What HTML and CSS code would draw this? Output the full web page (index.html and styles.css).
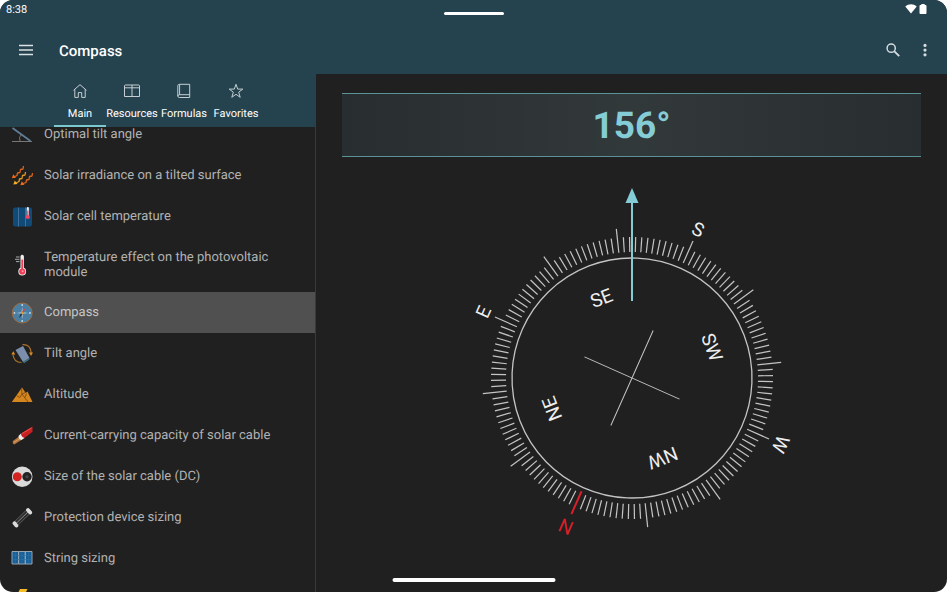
FILE: index.html
```html
<!DOCTYPE html>
<html lang="en">
<head>
    <meta charset="utf-8">
    <meta name="viewport" content="width=device-width, initial-scale=1">
    <title>Compass</title>
    <link rel="stylesheet" href="styles.css">
</head>
<body>
    <div class="app">
        <header class="header">
            <div class="status">
                <span>8:38</span>
                <span class="handle"></span>
                <span class="status-icons">
                    <svg width="12" height="10" viewBox="0 0 12 10"><path d="M0.3 2.4C3.6-.4 8.4-.4 11.7 2.4L6 9.6z" fill="#fff"/></svg>
                    <svg width="8" height="10" viewBox="0 0 8 10"><path d="M2.3 0h3.4v1H6.6q.9 0 .9.9v7.2q0 .9-.9.9H1.4q-.9 0-.9-.9V1.9q0-.9.9-.9h.9z" fill="#fff"/></svg>
                </span>
            </div>
            <div class="toolbar">
                <button type="button" class="icon-button">
                    <svg width="16" height="12" viewBox="0 0 16 12"><path d="M1 1.5h14M1 6h14M1 10.5h14" stroke="#dbe1e4" stroke-width="1.4"/></svg>
                </button>
                <h1>Compass</h1>
                <button type="button" class="icon-button">
                    <svg width="14" height="14" viewBox="0 0 14 14" fill="none" stroke="#d3dbde"><circle cx="5.2" cy="5.2" r="4.1" stroke-width="1.5"/><path d="M8.4 8.4l4.8 4.8" stroke-width="1.9"/></svg>
                </button>
                <button type="button" class="icon-button">
                    <svg width="4" height="14" viewBox="0 0 4 14" fill="#d3dbde"><circle cx="2" cy="2.4" r="1.6"/><circle cx="2" cy="7.1" r="1.6"/><circle cx="2" cy="11.8" r="1.6"/></svg>
                </button>
            </div>
        </header>

        <div class="content">
            <aside class="sidebar">
                <nav class="tabs">
                    <a href="#main" class="tab active">
                        <svg width="16" height="16" viewBox="0 0 16 16"><path d="M1.5 7.3L8 1.7l6.5 5.6M2.8 6.3v8.1h3.5V9.6h3.4v4.8h3.5V6.3"/></svg>
                        Main
                    </a>
                    <a href="#resources" class="tab">
                        <svg width="16" height="16" viewBox="0 0 16 16"><path d="M1.5 2q-1 0-1 1v10.5h15V3q0-1-1-1zM.5 4.8h15M8 2v11.5"/></svg>
                        Resources
                    </a>
                    <a href="#formulas" class="tab">
                        <svg width="16" height="16" viewBox="0 0 16 16"><path d="M3.5 1.3h10.2v13.2H3.5q-1.700 0-1.700-1.400V2.700q0-1.400 1.700-1.400zM1.800 13.100q0-1.400 1.700-1.400h10.200M3.600 1.300v10.400"/></svg>
                        Formulas
                    </a>
                    <a href="#favorites" class="tab">
                        <svg width="16" height="16" viewBox="0 0 16 16"><path d="M8 1.3l1.7 4.8h5.1l-4.1 3.1 1.5 5.1L8 11.3l-4.2 3 1.5-5.1-4.1-3.1h5.1z"/></svg>
                        Favorites
                    </a>
                </nav>
                <ul class="list" id="list">
                    <li><a href="#optimal" class="item">
                        <svg width="22" height="22" viewBox="0 0 22 22" fill="none"><path d="M1 17.5h20" stroke="#777" stroke-width="1.2"/><path d="M1.5 4l18 13" stroke="#5f7f99" stroke-width="1.7"/><path d="M9 17q-1.5-4 1-6" stroke="#777"/></svg>
                        Optimal tilt angle
                    </a></li>
                    <li><a href="#irradiance" class="item">
                        <svg width="22" height="22" viewBox="0 0 22 22" fill="none" stroke-width="1.3" stroke-linejoin="round">
                            <path d="M12.500 1l-.5 3-2.500.5-.5 3-2.500.5-.5 2.500-3 1.500" stroke="#d9651a"/>
                            <path d="M14.500 7l-.5 3-2.500.5-.5 3-2.500.5-.5 2.500-4 2" stroke="#e09a22"/>
                            <path d="M21.500 8l-.5 3-2.500.5-.5 3-2.500.5-.5 2.500-4 1.500" stroke="#d9651a"/>
                            <path d="M.8 13.300l1.500-4 2.700 3.500zM9.300 20.300l1.500-4 2.700 3.500z" fill="#ee6a14"/>
                            <path d="M2.300 19.500l1.500-4 2.700 3.500z" fill="#f5b025"/>
                        </svg>
                        Solar irradiance on a tilted surface
                    </a></li>
                    <li><a href="#cell" class="item">
                        <svg width="22" height="22" viewBox="0 0 22 22"><rect x="2" y="1.5" width="19" height="19" rx="2" fill="#104a78"/><path d="M7.500 1.500v19M14.500 1.500v19" stroke="#3f6f94"/><path d="M16.800 2v8" stroke="#eee" stroke-width="2.200" stroke-linecap="round"/><path d="M16.800 4.500v6" stroke="#ef3e58" stroke-width="1.200"/><circle cx="16.800" cy="11" r="2.100" fill="#ef4660"/></svg>
                        Solar cell temperature
                    </a></li>
                    <li><a href="#effect" class="item two-line">
                        <svg width="22" height="22" viewBox="0 0 22 22"><path d="M5 3h3.500M4 5.300h4.500M5 7.600h3.500" stroke="#aaa"/><path d="M11.200 2.500v13" stroke="#eee" stroke-width="3.400" stroke-linecap="round"/><circle cx="11.200" cy="17.500" r="3.900" fill="#eee"/><path d="M11.200 5.500v11" stroke="#ef3e58" stroke-width="1.700"/><circle cx="11.200" cy="17.500" r="3.100" fill="#f03e5a"/><circle cx="11.700" cy="17.300" r="1" fill="#ff9aaa"/></svg>
                        Temperature effect on the photovoltaic module
                    </a></li>
                    <li><a href="#compass" class="item selected">
                        <svg width="22" height="22" viewBox="0 0 22 22"><circle cx="11.200" cy="11" r="10" fill="#4a7fa3" stroke="#a06b3c"/><path d="M11.200 5l.7 5.300 5.300.7-5.300.7-.7 5.300-.7-5.300-5.300-.7 5.300-.7z" fill="#b6cbd9"/><path d="M11.200 2.200v1.500M11.200 18.300v1.500M2.700 11h1.500M18.200 11h1.500" stroke="#e5edf2" stroke-width="1.500"/><path d="M14.600 5.500l-2.400 6-1.900-1z" fill="#df3c35"/><path d="M7.800 16.500l2.400-6 1.900 1z" fill="#202429"/><circle cx="11.200" cy="11" r="1.200" fill="#e79a31"/></svg>
                        Compass
                    </a></li>
                    <li><a href="#tilt" class="item">
                        <svg width="22" height="22" viewBox="0 0 22 22"><path d="M11.500 1.700q8-.7 8.700 8.300M10.500 19.500q-7.700 0-8.500-8" fill="none" stroke="#ad7228" stroke-width="1.200"/><path d="M18 9.500h4L20 13zM.3 11.500l2-3.200 2 3.200z" fill="#d98b20"/><path d="M4.500 7L12 3l6.500 12-6.500 4z" fill="#7b8eab"/><path d="M12 19l6.500-4v1.500L13 20.200z" fill="#3e7480"/></svg>
                        Tilt angle
                    </a></li>
                    <li><a href="#altitude" class="item">
                        <svg width="22" height="22" viewBox="0 0 22 22"><path d="M.8 18L11 3.500l3.700 5.500 1.800-1.500L21.500 18z" fill="#d6861f"/><path d="M5.500 11.500l3.300 2 2.200-3.500 6 8M10.500 4.500l.5 5.500 3.500-1.500M15.500 9.500l-1.500 4" fill="none" stroke="#6f4718" stroke-width=".8"/></svg>
                        Altitude
                    </a></li>
                    <li><a href="#capacity" class="item">
                        <svg width="22" height="22" viewBox="0 0 22 22"><path d="M1.800 16l7-5 2.500 3.500-8 5q-2-.5-1.500-3.500z" fill="#b07440"/><path d="M2.800 17.500l7.500-5" stroke="#dfa468"/><path d="M7.500 11l2.500-2.500 3.500 4.500-3 2q-3-.5-3-4z" fill="#eee"/><path d="M10 8.500l11.500-7v5.300L13.500 13q-3.500-1-3.500-4.500z" fill="#c91f20"/><path d="M11 8.600l9.500-5.600" stroke="#e8554c"/></svg>
                        Current-carrying capacity of solar cable
                    </a></li>
                    <li><a href="#cable" class="item">
                        <svg width="22" height="22" viewBox="0 0 22 22"><circle cx="11.200" cy="10.700" r="10.300" fill="#dadada"/><circle cx="6.300" cy="10.700" r="4.500" fill="#d32321"/><circle cx="16" cy="10.700" r="4.700" fill="#242424"/><circle cx="16" cy="10.700" r="1.500" fill="#484848"/></svg>
                        Size of the solar cable (DC)
                    </a></li>
                    <li><a href="#protection" class="item">
                        <svg width="22" height="22" viewBox="0 0 22 22"><path d="M4 17.500L18 4" stroke="#5c5c5c" stroke-width="5.600"/><path d="M4 17.500L18 4" stroke="#2b2b2b" stroke-width="4"/><path d="M4 17.500L18 4" stroke="#999" stroke-width=".9"/><path d="M3.500 16.300l1.900 2.300M17 3l2.200 2.500" stroke="#dcdcdc" stroke-width="3.800" stroke-linecap="round"/></svg>
                        Protection device sizing
                    </a></li>
                    <li><a href="#string" class="item">
                        <svg width="22" height="22" viewBox="0 0 22 22"><g fill="#175f98" stroke="#94a4b0"><path d="M1 3.500h6.600v12.500H1zM7.600 3.500h6.700v12.500H7.600zM14.300 3.500H21v12.500h-6.700z"/></g><path d="M4.300 4v11.500M11 4v11.500M17.700 4v11.500M1.500 7.500h19M1.500 11.500h19" stroke="#2f74a6" stroke-width=".6"/></svg>
                        String sizing
                    </a></li>
                    <li class="item">
                        <svg width="22" height="22" viewBox="0 0 22 22"><path d="M9 0h7.500l-3 6h5L7 21l2.500-11H4z" fill="#f7bd24"/></svg>
                    </li>
                </ul>
            </aside>

            <main class="main">
                <div class="reading">156°</div>
                <svg class="compass" viewBox="-190 -190 380 380">
                    <g transform="rotate(-156)">
                        <g id="ticks" class="ticks"></g>
                        <circle class="ring" r="120"/>
                        <path class="cross" d="M0-52V52M-52 0H52"/>
                        <path class="north" d="M0-124V-149"/>
                        <g id="labels" class="labels"></g>
                    </g>
                    <path class="needle" d="M0-77V-180"/>
                    <path class="needle-head" d="M0-190L6.500-175H-6.500z"/>
                </svg>
            </main>
        </div>
        <span class="nav-handle"></span>
    </div>

    <script>
        const svgNs = 'http://www.w3.org/2000/svg';
        const ticks = document.getElementById('ticks');
        const labels = document.getElementById('labels');

        // one tick every 2.5 degrees, a longer one every 30
        for (let angle = 2.5; angle < 360; angle += 2.5) {
            const line = document.createElementNS(svgNs, 'line');
            line.setAttribute('y1', -126);
            line.setAttribute('y2', angle % 30 === 0 ? -150 : -141);
            line.setAttribute('transform', 'rotate(' + angle + ')');
            ticks.appendChild(line);
        }

        ['N', 'NE', 'E', 'SE', 'S', 'SW', 'W', 'NW'].forEach((name, i) => {
            const text = document.createElementNS(svgNs, 'text');
            text.textContent = name;
            text.setAttribute('y', name.length === 1 ? -156 : -79);
            text.setAttribute('transform', 'rotate(' + i * 45 + ')');
            if (name === 'N') {
                text.setAttribute('class', 'north-label');
            }
            labels.appendChild(text);
        });

        document.getElementById('list').scrollTop = 13;
    </script>
</body>
</html>
```
FILE: styles.css
```css
* {
    box-sizing: border-box;
}
body {
    margin: 0;
    background-color: #fff;
    font-family: Roboto, sans-serif;
    text-rendering: geometricPrecision;
}
a {
    color: inherit;
    text-decoration: none;
}
.app {
    position: relative;
    display: flex;
    flex-direction: column;
    height: 100vh;
    border-radius: 13px;
    overflow: hidden;
    background-color: #202020;
}
.header {
    background-color: #25424f;
    color: #fff;
}
.status {
    display: grid;
    grid-template-columns: 1fr auto 1fr;
    align-items: center;
    height: 18px;
    padding: 0 20px 0 6px;
    font-size: 11px;
}
.handle {
    width: 60px;
    height: 3px;
    margin: 8px 0 0 14px;
    border-radius: 2px;
    background-color: #fff;
}
.status-icons {
    display: flex;
    justify-content: flex-end;
    gap: 2px;
}
.toolbar {
    display: flex;
    align-items: center;
    height: 56px;
    padding: 8px 14px 0 10px;
}
.toolbar h1 {
    flex: 1;
    margin: 2px 0 0 17px;
    font-size: 15px;
    font-weight: 500;
}
.icon-button {
    display: flex;
    align-items: center;
    justify-content: center;
    width: 32px;
    height: 32px;
    padding: 0;
    border: none;
    background: none;
    cursor: pointer;
}
.toolbar h1 ~ .icon-button:last-child {
    width: 16px;
    margin-left: 8px;
}
.content {
    display: flex;
    flex: 1;
    min-height: 0;
}
.sidebar {
    display: flex;
    flex-direction: column;
    width: 33.4%;
    border-right: 1px solid #3a3a3a;
}
.tabs {
    display: flex;
    height: 53px;
    margin-right: -1px;
    padding-left: 54px;
    background-color: #25424f;
    color: #fff;
}
.tab {
    display: flex;
    flex-direction: column;
    align-items: center;
    gap: 8px;
    width: 52px;
    padding-top: 9px;
    border-bottom: 2px solid transparent;
    font-size: 11px;
    line-height: 13px;
}
.tab.active {
    border-bottom-color: #7cc8d0;
}
.tab svg {
    fill: none;
    stroke: #c5cfd3;
}
.list {
    flex: 1;
    margin: 0;
    padding: 0;
    overflow-y: auto;
    scrollbar-width: none;
    list-style: none;
}
.item {
    display: flex;
    align-items: center;
    gap: 11px;
    min-height: 41px;
    padding: 0 40px 0 11px;
    color: #b2b2b2;
    font-size: 13px;
    line-height: 15px;
}
.item svg {
    flex-shrink: 0;
}
.two-line {
    min-height: 55px;
}
.selected {
    background-color: #505050;
    color: #c6c6c6;
}
.main {
    display: flex;
    flex: 1;
    flex-direction: column;
    align-items: center;
    gap: 31px;
    padding: 19px 26px 0;
}
.reading {
    width: 100%;
    padding-top: 4px;
    border-top: 1px solid #5b9298;
    border-bottom: 1px solid #5b9298;
    background: linear-gradient(to right, #282d2f, #32393b, #282d2f);
    color: #85cdd6;
    font-size: 37px;
    font-weight: 700;
    line-height: 58px;
    text-align: center;
}
.compass {
    width: 100%;
    max-width: 380px;
}
.ticks {
    stroke: #c4c4c4;
    stroke-width: 1.2;
}
.ring {
    fill: none;
    stroke: #c4c4c4;
    stroke-width: 1.3;
}
.cross {
    stroke: #c4c4c4;
}
.north {
    stroke: #d8202a;
    stroke-width: 2;
}
.labels {
    fill: #eee;
    font-size: 19px;
    text-anchor: middle;
}
.north-label {
    fill: #d8202a;
}
.needle {
    stroke: #85cdd6;
    stroke-width: 2;
}
.needle-head {
    fill: #85cdd6;
}
.nav-handle {
    position: absolute;
    bottom: 10px;
    left: 50%;
    width: 163px;
    height: 4px;
    transform: translateX(-50%);
    border-radius: 2px;
    background-color: #fff;
}
```
